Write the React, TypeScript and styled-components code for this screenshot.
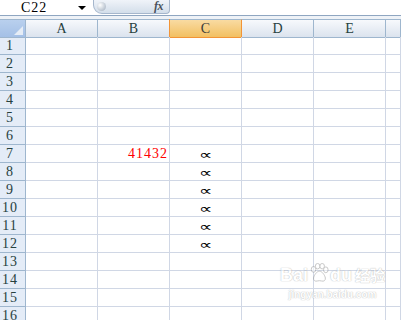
import * as React from "react";
import styled, { createGlobalStyle } from "styled-components";

const GlobalStyle = createGlobalStyle`
  body {
    margin: 0;
    overflow: hidden;
    background: #ffffff;
  }
`;

const Page = styled.div`
  position: relative;
  width: 401px;
  height: 320px;
  overflow: hidden;
  background: #ffffff;
  font-family: "Liberation Serif", "DejaVu Serif", serif;
`;

const FormulaBar = styled.div`
  display: flex;
  height: 15px;
  border-bottom: 1px solid #8fa6c1;
  background: #ffffff;
`;

const NameBox = styled.div`
  display: flex;
  align-items: center;
  width: 77px;
  padding-left: 21px;
  box-sizing: border-box;
  font-size: 14px;
  letter-spacing: 1px;
  color: #000000;
`;

const DropArrow = styled.div`
  width: 16px;
  display: flex;
  align-items: center;
  justify-content: center;

  &::after {
    content: "";
    border-left: 4px solid transparent;
    border-right: 4px solid transparent;
    border-top: 4px solid #000000;
    margin-left: -6px;
  }
`;

const FxPill = styled.div`
  display: flex;
  align-items: center;
  justify-content: space-between;
  width: 77px;
  height: 15px;
  margin-top: -1px;
  box-sizing: border-box;
  padding: 0 6px 0 3px;
  border: 1px solid #a5b6cc;
  border-top: none;
  border-radius: 0 0 4px 9px;
  background: linear-gradient(#f2f5fa, #d3deea);
`;

const Knob = styled.div`
  width: 9px;
  height: 9px;
  border-radius: 50%;
  background: radial-gradient(circle at 35% 35%, #ffffff, #b9c3cf 70%, #9aa6b4);
`;

const FxLabel = styled.span`
  font-family: "Liberation Serif", serif;
  font-style: italic;
  font-weight: bold;
  font-size: 12px;
  line-height: 12px;
  color: #4a525c;
  letter-spacing: -0.5px;
`;

const Gap = styled.div`
  height: 3px;
  background: #eef2f7;
`;

const Grid = styled.div`
  display: grid;
  grid-template-columns: 26px repeat(5, 72px) 1fr;
  grid-auto-rows: 18px;
`;

const Corner = styled.div`
  position: relative;
  height: 19px;
  box-sizing: border-box;
  border-top: 1px solid #9eb6ce;
  border-bottom: 1px solid #9eb6ce;
  border-right: 1px solid #9eb6ce;
  background: linear-gradient(#b9d0ee, #a4c0e6);

  &::after {
    content: "";
    position: absolute;
    right: 2px;
    bottom: 2px;
    border-left: 9px solid transparent;
    border-bottom: 9px solid #e6edf6;
  }
`;

const ColHead = styled.div<{ $active?: boolean }>`
  height: 19px;
  box-sizing: border-box;
  display: flex;
  align-items: center;
  justify-content: center;
  font-size: 14px;
  color: ${(p) => (p.$active ? "#3a3a3a" : "#27413e")};
  border-top: 1px solid #9eb6ce;
  border-bottom: 1px solid ${(p) => (p.$active ? "#f29436" : "#9eb6ce")};
  border-right: 1px solid ${(p) => (p.$active ? "#f29436" : "#9eb6ce")};
  box-shadow: ${(p) => (p.$active ? "-1px 0 0 #f29436" : "none")};
  background: ${(p) =>
    p.$active
      ? "linear-gradient(#f9dba2, #f2c062)"
      : "linear-gradient(#f7f9fc, #dbe3ee)"};
`;

const RowHead = styled.div`
  box-sizing: border-box;
  display: flex;
  align-items: center;
  justify-content: center;
  padding-right: 5px;
  padding-top: 1px;
  font-size: 14px;
  letter-spacing: 1px;
  color: #27413e;
  background: #e4ecf7;
  border-right: 1px solid #9eb6ce;
  border-bottom: 1px solid #9eb6ce;
`;

const Cell = styled.div<{ $align?: "left" | "right" | "center"; $color?: string }>`
  box-sizing: border-box;
  display: flex;
  align-items: center;
  justify-content: ${(p) =>
    p.$align === "right" ? "flex-end" : p.$align === "center" ? "center" : "flex-start"};
  padding: 1px 1px 0 2px;
  font-size: 14px;
  letter-spacing: 1px;
  color: ${(p) => p.$color || "#000000"};
  border-right: 1px solid #d0d7e5;
  border-bottom: 1px solid #d0d7e5;
`;

const Prop = styled.span`
  display: inline-block;
  font-family: "DejaVu Sans", sans-serif;
  font-size: 13px;
  letter-spacing: 0;
  line-height: 1;
  transform: scale(1.45, 1);
`;

const Watermark = styled.div`
  position: absolute;
  left: 280px;
  top: 262px;
  display: flex;
  flex-direction: column;
  align-items: center;
  white-space: nowrap;
  opacity: 0.5;
  pointer-events: none;
`;

const MarkTop = styled.div`
  display: flex;
  align-items: flex-end;
  font-family: "Liberation Sans", "Noto Sans CJK SC", sans-serif;
  font-weight: bold;
  font-size: 18px;
  line-height: 20px;
  color: #ffffff;
  text-shadow: 0 0 1px #8a8a8a, 0 0 1px #8a8a8a;
`;

const MarkCn = styled.span`
  font-family: "Noto Sans CJK SC", sans-serif;
  font-size: 15px;
  margin-left: 3px;
`;

const MarkUrl = styled.div`
  font-family: "Liberation Sans", sans-serif;
  font-weight: bold;
  font-size: 10px;
  color: #ffffff;
  text-shadow: 0 0 1px #909090, 0 0 1px #909090;
  margin-top: 4px;
`;

const cols = ["A", "B", "C", "D", "E", ""];

const data: Record<string, { v: string; align: "left" | "right" | "center"; color?: string; sym?: boolean }> = {
  "7-1": { v: "41432", align: "right", color: "#ff0000" },
  "7-2": { v: "∝", align: "center", sym: true },
  "8-2": { v: "∝", align: "center", sym: true },
  "9-2": { v: "∝", align: "center", sym: true },
  "10-2": { v: "∝", align: "center", sym: true },
  "11-2": { v: "∝", align: "center", sym: true },
  "12-2": { v: "∝", align: "center", sym: true },
};

const Paw = () => (
  <svg width="20" height="22" viewBox="0 0 22 22" style={{ margin: "0 1px 1px" }}>
    <g fill="#ffffff" stroke="#8a8a8a" strokeWidth="1">
      <ellipse cx="5" cy="7" rx="2.5" ry="3.2" />
      <ellipse cx="9.5" cy="3.5" rx="2.5" ry="3" />
      <ellipse cx="14.5" cy="3.5" rx="2.5" ry="3" />
      <ellipse cx="18.5" cy="7.5" rx="2.5" ry="3.2" />
      <path d="M11.5 9c-3 0-6 4.5-6.5 7.5-.4 2.8 2 4 4 3.3 1.5-.5 3.5-.5 5 0 2 .7 4.4-.5 4-3.3C17.5 13.5 14.5 9 11.5 9z" />
    </g>
  </svg>
);

export default function App() {
  const rows = Array.from({ length: 16 }, (_, i) => i + 1);
  return (
    <Page>
      <GlobalStyle />
      <FormulaBar>
        <NameBox>C22</NameBox>
        <DropArrow />
        <FxPill>
          <Knob />
          <FxLabel>fx</FxLabel>
        </FxPill>
      </FormulaBar>
      <Gap />
      <Grid>
        <Corner />
        {cols.map((c, i) => (
          <ColHead key={i} $active={c === "C"}>
            {c}
          </ColHead>
        ))}
        {rows.map((r) => (
          <React.Fragment key={r}>
            <RowHead>{r}</RowHead>
            {cols.map((_, ci) => {
              const d = data[`${r}-${ci}`];
              return (
                <Cell key={ci} $align={d?.align} $color={d?.color}>
                  {d ? d.sym ? <Prop>{d.v}</Prop> : d.v : null}
                </Cell>
              );
            })}
          </React.Fragment>
        ))}
      </Grid>
      <Watermark>
        <MarkTop>
          <span>Bai</span>
          <Paw />
          <span>du</span>
          <MarkCn>经验</MarkCn>
        </MarkTop>
        <MarkUrl>jingyan.baidu.com</MarkUrl>
      </Watermark>
    </Page>
  );
}
